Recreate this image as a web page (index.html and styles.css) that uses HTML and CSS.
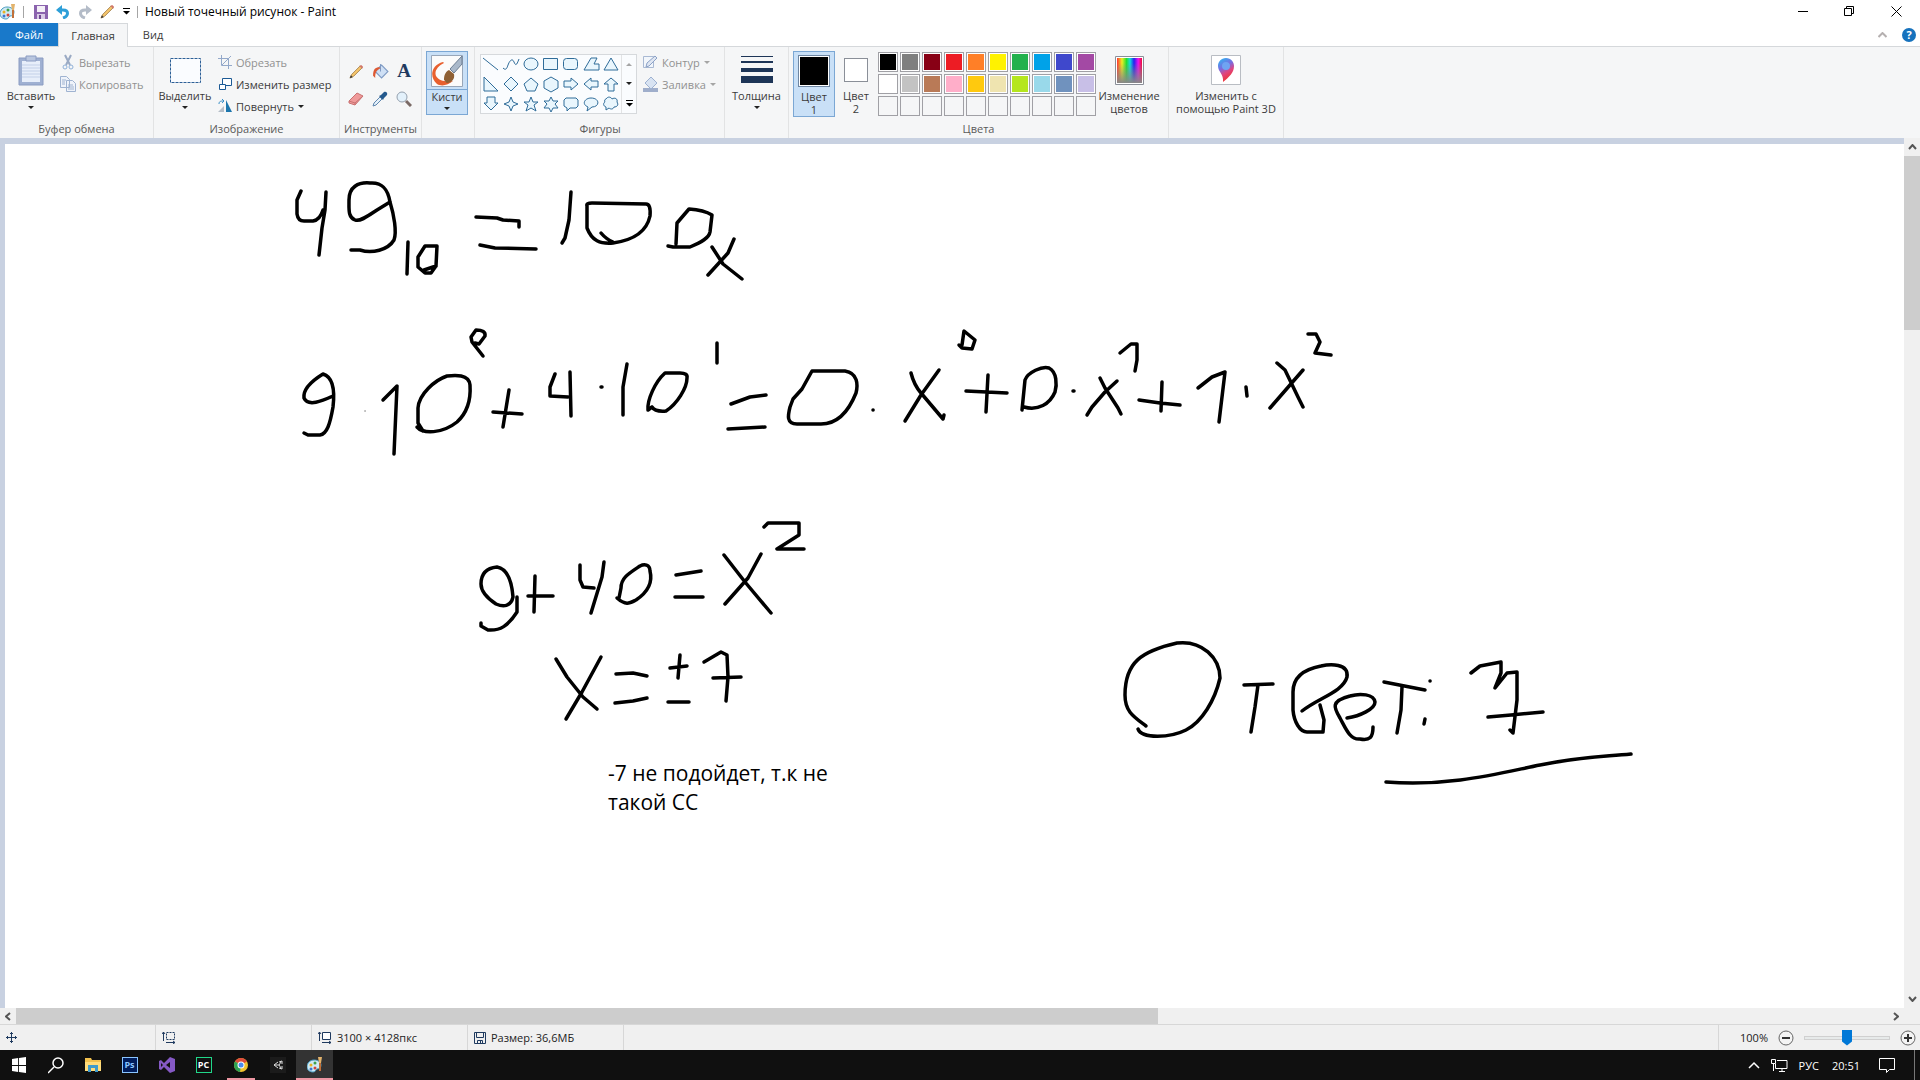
FILE: index.html
```html
<!DOCTYPE html>
<html lang="ru">
<head>
  <meta charset="UTF-8" />
  <meta name="viewport" content="width=device-width, initial-scale=1.0"/>
  <title>Новый точечный рисунок - Paint</title>

  <link rel="stylesheet" href="styles.css">
</head>

<body>
  <svg class="defs" width="0" height="0" aria-hidden="true">
    <defs>
      <linearGradient id="rainbow">
        <stop offset="0" stop-color="#f33"/><stop offset=".2" stop-color="#ee2"/>
        <stop offset=".38" stop-color="#2d3"/><stop offset=".52" stop-color="#1dd"/>
        <stop offset=".68" stop-color="#22e"/><stop offset=".85" stop-color="#e1e"/>
        <stop offset="1" stop-color="#e13"/>
      </linearGradient>
      <linearGradient id="fade" x2="0" y2="1">
        <stop offset=".2" stop-color="#888" stop-opacity="0"/><stop offset="1" stop-color="#888"/>
      </linearGradient>
      <linearGradient id="drop" x1="0" y1="0" x2=".4" y2="1">
        <stop offset="0" stop-color="#22c0f5"/><stop offset=".45" stop-color="#7b6be0"/>
        <stop offset=".7" stop-color="#e0457f"/><stop offset="1" stop-color="#e33"/>
      </linearGradient>
      <symbol id="palette" viewBox="0 0 16 16">
        <path d="M7 3C3 3 0 6 0 10c0 3 3 5 6 5 3 0 2-2 4-3 2 0 4-1 4-4 0-3-3-5-7-5z" fill="#cfeaf5" stroke="#4a9cc0"/>
        <circle cx="4" cy="8" r="1.5" fill="#e8b122"/><circle cx="8" cy="6" r="1.5" fill="#3f9f4a"/>
        <circle cx="4" cy="12" r="1.5" fill="#3c74d0"/><circle cx="8" cy="11" r="1.5" fill="#d0463c"/>
        <path d="M11 0h4l-1 6h-2z" fill="#e2b36c"/><path d="M13 6v8" stroke="#c0703a" stroke-width="2"/>
      </symbol>
      <symbol id="pencil" viewBox="0 0 16 16">
        <path d="M1 15l2-4 9-9 2 2-9 9z" fill="#f6c66b" stroke="#a5834f"/>
        <path d="M11 2l3 3 1-2-2-2z" fill="#d2776a"/><path d="M1 15l1-3 2 2z" fill="#333"/>
      </symbol>
      <symbol id="bucket" viewBox="0 0 16 16">
        <path d="M3 8l6-6 6 6-6 6z" fill="#cfe0f5" stroke="#7f9bc4"/><path d="M8 1v7" stroke="#7f9bc4" fill="none"/>
        <path d="M7 4C3 4 1 6 1 12l2 2c0-5 1-7 5-9z" fill="#dd5a35"/>
      </symbol>
    </defs>
  </svg>

  <header class="titlebar">
    <svg class="app-icon" width="16" height="16"><use href="#palette"/></svg>
    <span class="divider"></span>
    <button class="quick" aria-label="Сохранить">
      <svg width="14" height="14" viewBox="0 0 14 14"><path d="M0 0h14v14H0z" fill="#8b63ae"/><path d="M3 1h8v6H3z" fill="#f3eff7"/><path d="M3 9h8v5H3z" fill="#d9cbe6"/><path d="M5 10h2v4H5z" fill="#6d4892"/></svg>
    </button>
    <button class="quick" aria-label="Отменить">
      <svg width="14" height="14" viewBox="0 0 14 14"><path d="M2 5h5c6 0 6 6 0 8" fill="none" stroke="#2e9fd8" stroke-width="3"/><path d="M0 5l6-5v10z" fill="#2e9fd8"/></svg>
    </button>
    <button class="quick" aria-label="Повторить">
      <svg width="14" height="14" viewBox="0 0 14 14"><path d="M12 5H7c-6 0-6 6 0 8" fill="none" stroke="#b4bcc8" stroke-width="3"/><path d="M14 5L8 0v10z" fill="#b4bcc8"/></svg>
    </button>
    <button class="quick" aria-label="Карандаш"><svg width="15" height="15"><use href="#pencil"/></svg></button>
    <button class="quick more" aria-label="Настройка панели">
      <svg width="7" height="7" viewBox="0 0 7 7"><path d="M0 0h7v1H0zM0 3h7L3.500 6.500z"/></svg>
    </button>
    <span class="divider"></span>
    <h1>Новый точечный рисунок - Paint</h1>
    <div class="window-buttons">
      <button aria-label="Свернуть"><svg width="11" height="11"><path d="M0 5.500h10" stroke="#000"/></svg></button>
      <button aria-label="Восстановить"><svg width="11" height="11"><path d="M.5 2.500h7v7h-7zM2.500 2.500v-2h7v7h-2" fill="none" stroke="#000"/></svg></button>
      <button aria-label="Закрыть"><svg width="11" height="11"><path d="M.5 .5l10 10M10.500 .5l-10 10" stroke="#000"/></svg></button>
    </div>
  </header>

  <nav class="tabs">
    <a class="tab file" href="#file">Файл</a>
    <a class="tab active" href="#home">Главная</a>
    <a class="tab" href="#view">Вид</a>
    <div class="tabs-right">
      <button aria-label="Свернуть ленту"><svg width="9" height="6"><path d="M.5 5l4-4 4 4" fill="none" stroke="#b5b0b0" stroke-width="2"/></svg></button>
      <button class="help" aria-label="Справка">?</button>
    </div>
  </nav>

  <section class="ribbon">
    <div class="group clipboard">
      <div class="tools">
        <button class="big">
          <span class="pic"><svg width="26" height="31" viewBox="0 0 26 31"><path d="M1 3h24v27H1z" fill="#9fb0d2" stroke="#8b9cc2"/><path d="M4 6h18v21H4z" fill="#e7eefa"/><path d="M4 10h18M4 13h18M4 16h18M4 19h18M4 22h18" stroke="#c3d0e8"/><path d="M8 1h10v5H8z" fill="#b9c6df" stroke="#8b9cc2"/></svg></span>
          <span>Вставить</span><i class="arrow"></i>
        </button>
        <div class="list">
          <button class="small off"><svg width="16" height="16" viewBox="0 0 16 16"><path d="M5 1l5 10M11 1L6 11" stroke="#9aaac4" stroke-width="2"/><circle cx="5" cy="13" r="2" fill="none" stroke="#8fb0d8"/><circle cx="11" cy="13" r="2" fill="none" stroke="#8fb0d8"/></svg>Вырезать</button>
          <button class="small off"><svg width="16" height="16" viewBox="0 0 16 16"><path d="M.5 .5h6l3 3v8h-9zM6.500 4.500h6l3 3v8h-9z" fill="#eff3fa" stroke="#9fb3d1"/><path d="M2 4h4M2 6h3M2 8h3M8 9h5M8 11h6M8 13h6" stroke="#9fb3d1"/></svg>Копировать</button>
        </div>
      </div>
      <div class="name">Буфер обмена</div>
    </div>

    <div class="group image">
      <div class="tools">
        <button class="big">
          <span class="pic"><svg width="31" height="25"><path d="M.5 .5h30v24H.5z" fill="#fafcff" stroke="#2c5f96" stroke-dasharray="3 1"/></svg></span>
          <span>Выделить</span><i class="arrow"></i>
        </button>
        <div class="list">
          <button class="small off"><svg width="14" height="14" viewBox="0 0 14 14"><path d="M3.500 0v10.500H14M0 3.500h10.500V14M13 1L4 10" fill="none" stroke="#94a9ca"/></svg>Обрезать</button>
          <button class="small"><svg width="14" height="14" viewBox="0 0 14 14"><path d="M4.500 1.500h9v7h-9z" fill="#fff" stroke="#1c5a95"/><path d="M1.500 7.500h6v5h-6z" fill="#fff" stroke="#1c5a95"/></svg>Изменить размер</button>
          <button class="small"><svg width="14" height="14" viewBox="0 0 14 14"><path d="M8 1v12h6z" fill="#1c76ad"/><path d="M0 13l6-6v6z" fill="#b5bec8"/><path d="M1 5c0-3 2-3 5-3M4 0l2 2-2 2" fill="none" stroke="#3b90c8"/></svg>Повернуть<i class="arrow"></i></button>
        </div>
      </div>
      <div class="name">Изображение</div>
    </div>

    <div class="group instruments">
      <div class="tool-grid">
        <button aria-label="Карандаш"><svg width="15" height="15"><use href="#pencil"/></svg></button>
        <button aria-label="Заливка"><svg width="17" height="17"><use href="#bucket"/></svg></button>
        <button class="letter" aria-label="Текст">A</button>
        <button aria-label="Ластик"><svg width="16" height="14" viewBox="0 0 16 14"><path d="M1 9l8-8 6 3-8 9-6-2z" fill="#ef9a9a" stroke="#c97272"/><path d="M1 9l6 2 8-7M7 11v2" fill="none" stroke="#c97272"/></svg></button>
        <button aria-label="Палитра"><svg width="16" height="16" viewBox="0 0 16 16"><path d="M1 15l1-3 6-6 2 2-6 6z" fill="#e4f0fa" stroke="#5f86ae"/><path d="M7 5l4 4 1-2 3-3c1-2-1-4-3-3L9 4z" fill="#24598d"/></svg></button>
        <button aria-label="Масштаб"><svg width="16" height="16" viewBox="0 0 16 16"><circle cx="6" cy="6" r="5" fill="#e3f1fb" stroke="#94a0ae"/><path d="M10 10l5 5" stroke="#7a6a66" stroke-width="3"/></svg></button>
      </div>
      <div class="name">Инструменты</div>
    </div>

    <div class="group brushes">
      <button class="big selected">
        <span class="pic"><svg width="32" height="32" viewBox="0 0 32 32"><path d="M.5 .5h31v31H.5z" fill="#fbfbfb" stroke="#98a6b8"/><path d="M12 7C0 10-2 22 6 29c5 3 11 1 16-3-7 1-14 0-17-5-2-5 2-10 8-13z" fill="#e8602f"/><path d="M31 1v8l-8 9-4-4z" fill="#a9b8ca" stroke="#6d7f94"/><path d="M18 15l5 4c1 5-2 8-6 9-3 0-2-2-4-3 0-4 1-8 5-10z" fill="#8f6034"/></svg></span>
        <span>Кисти</span><i class="arrow"></i>
      </button>
    </div>

    <div class="group shapes">
      <div class="tools">
        <div class="gallery">
          <svg width="140" height="58" viewBox="0 0 140 58">
            <g fill="#e9f6fd" stroke="#2f6c99">
              <path d="M2 3l15 12" />
              <path d="M22 13c3 3 4 0 5-3s4-8 6-3 3 2 5-3" fill="none"/>
              <ellipse cx="50" cy="9" rx="7" ry="6"/>
              <path d="M62.500 3.500h14v11h-14z"/>
              <rect x="82.500" y="3.500" width="14" height="11" rx="3"/>
              <path d="M103 15l7-12h6l-3 6h5v6z"/>
              <path d="M130 3l7 12h-14z"/>
              <path d="M3 22v14h14z"/><path d="M30 22l7 7-7 7-7-7z"/>
              <path d="M50 23l7 6-3 7h-8l-3-7z"/><path d="M70 22l7 4v7l-7 4-7-4v-7z"/>
              <path d="M83 26h7v-3l7 6-7 6v-3h-7z"/><path d="M117 26h-7v-3l-7 6 7 6v-3h7z"/>
              <path d="M127 36v-7h-4l7-6 7 6h-4v7z"/>
              <path d="M6 42h8v6h3l-7 7-7-7h3z"/><path d="M30 42l2 5 5 2-5 2-2 5-2-5-5-2 5-2z"/>
              <path d="M50 42l2 5h5l-4 3 2 6-5-3-5 3 2-6-4-3h5z"/>
              <path d="M70 42l2 4h5l-3 3 3 4h-5l-2 4-2-4h-5l3-4-3-3h5z"/>
              <path d="M85 43h10l2 2v6l-2 2h-6l-3 3v-3l-3-2v-6z"/>
              <path d="M107 52c-7-3-3-9 3-9 9 0 9 9 1 9l-5 4z"/>
              <path d="M125 44c2-3 5-2 6 0 3-2 6 0 5 3 2 3 0 5-3 5-1 3-4 2-5 1l-3 2v-3c-3-1-3-4-1-5-1-1 0-3 1-3z"/>
            </g>
          </svg>
          <div class="gallery-nav">
            <button class="off" aria-label="Вверх"><i class="arrow up"></i></button>
            <button aria-label="Вниз"><i class="arrow"></i></button>
            <button aria-label="Все фигуры"><svg width="7" height="7" viewBox="0 0 7 7"><path d="M0 0h7v1H0zM0 3h7L3.500 6.500z"/></svg></button>
          </div>
        </div>
        <div class="list">
          <button class="small off"><svg width="15" height="14" viewBox="0 0 15 14"><path d="M.5 1.500h10v11H.5z" fill="#f2f6fb" stroke="#a9b9d3"/><path d="M3 12l1-4 8-7 2 2-8 8z" fill="#dfe6f2" stroke="#8ba1c6"/></svg>Контур<i class="arrow"></i></button>
          <button class="small off"><svg width="15" height="16" viewBox="0 0 15 16"><path d="M0 12h15v4H0z" fill="#9faecb"/><path d="M2 7l6-6 6 6-6 6z" fill="#d8e3f2" stroke="#9db1d1"/></svg>Заливка<i class="arrow"></i></button>
        </div>
      </div>
      <div class="name">Фигуры</div>
    </div>

    <div class="group width">
      <button class="big">
        <span class="pic"><svg width="32" height="28"><path d="M0 0h32v1H0zM0 5h32v2H0zM0 12h32v4H0zM0 20h32v7H0z" fill="#1d3557"/></svg></span>
        <span>Толщина</span><i class="arrow"></i>
      </button>
    </div>

    <div class="group colors">
      <div class="tools">
        <button class="big pick selected"><span class="pic"><i class="swatch large"></i></span><span>Цвет<br>1</span></button>
        <button class="big pick"><span class="pic"><i class="swatch"></i></span><span>Цвет<br>2</span></button>
        <div class="palette">
          <button style="--c:#000" aria-label="Черный"></button><button style="--c:#7f7f7f" aria-label="Серый"></button><button style="--c:#880015" aria-label="Темно-красный"></button><button style="--c:#ed1c24" aria-label="Красный"></button><button style="--c:#ff7f27" aria-label="Оранжевый"></button><button style="--c:#fff200" aria-label="Желтый"></button><button style="--c:#22b14c" aria-label="Зеленый"></button><button style="--c:#00a2e8" aria-label="Бирюзовый"></button><button style="--c:#3f48cc" aria-label="Индиго"></button><button style="--c:#a349a4" aria-label="Лиловый"></button>
          <button style="--c:#fff" aria-label="Белый"></button><button style="--c:#c3c3c3" aria-label="Светло-серый"></button><button style="--c:#b97a57" aria-label="Коричневый"></button><button style="--c:#ffaec9" aria-label="Розовый"></button><button style="--c:#ffc90e" aria-label="Золотой"></button><button style="--c:#efe4b0" aria-label="Светло-желтый"></button><button style="--c:#b5e61d" aria-label="Травяной"></button><button style="--c:#99d9ea" aria-label="Светло-бирюзовый"></button><button style="--c:#7092be" aria-label="Сизый"></button><button style="--c:#c8bfe7" aria-label="Светло-лиловый"></button>
          <button class="empty"></button><button class="empty"></button><button class="empty"></button><button class="empty"></button><button class="empty"></button><button class="empty"></button><button class="empty"></button><button class="empty"></button><button class="empty"></button><button class="empty"></button>
        </div>
        <button class="big edit">
          <span class="pic"><svg width="29" height="29"><path d="M.5 .5h28v28H.5z" fill="#fff" stroke="#8a8f98"/><path d="M2 2h25v25H2z" fill="url(#rainbow)"/><path d="M2 2h25v25H2z" fill="url(#fade)"/></svg></span>
          <span>Изменение<br>цветов</span>
        </button>
      </div>
      <div class="name">Цвета</div>
    </div>

    <div class="group paint3d">
      <button class="big">
        <span class="pic"><svg width="30" height="30"><path d="M.5 .5h29v29H.5z" fill="#fff" stroke="#b9bdc3"/><path d="M15 3c-5 0-8 4-8 8 0 6 6 8 5 16 6-5 11-9 11-16 0-4-3-8-8-8z" fill="url(#drop)"/><circle cx="15" cy="11" r="4" fill="#6fa4f2"/></svg></span>
        <span>Изменить с<br>помощью Paint 3D</span>
      </button>
    </div>
  </section>

  <main class="workspace">
    <div class="sheet">
      <!-- pen strokes, window coordinates -->
      <svg class="ink" width="3100" height="4128" viewBox="5 144 3100 4128" stroke-width="3.500">
        <path d="M301 191L297 200V214Q298 221 304 221H313Q320 220 323 210M326 192L325 210 322 228 319 255"/>
        <path d="M390 202L377 210C368 216 360 222 355 220C348 217 349 210 349 200C349 187 358 182 370 183C383 182 388 190 390 202C394 215 397 232 394 240C388 250 372 254 360 250H351"/>
        <path d="M408 242L407 274M437 246H425L418 257V267L425 273H431L436 266ZM424 270L436 266"/>
        <path d="M476 217L497 218 503 220 519 221V227M480 245L495 248 536 249"/>
        <path d="M571 192L569 220 565 238 562 243M587 228V206Q586 203 592 203L646 204Q651 204 650 216C647 230 635 240 613 243C600 244 592 241 587 228M601 233Q606 239 613 242"/>
        <path d="M668 246L673 247H690C702 242 709 238 710 232L712 215Q704 210 689 209L677 223 676 244"/>
        <path d="M734 239L728 253 708 275M712 247L723 264 742 279"/>

        <path d="M333 396C322 401 308 407 304 398C303 390 310 382 323 374C333 377 335 390 333 407C330 424 327 434 320 435H308L304 433"/>
        <path d="M383 400L397 386 394 454M417 427C423 434 442 434 457 422C468 412 471 400 470 385C469 374 455 375 447 376C435 380 419 394 418 408V423L423 431"/>
        <path d="M483 356L472 342 471 337 476 330Q486 330 485 336L479 344 475 343"/>
        <path d="M493 412L522 414M509 390L503 427M555 374L550 387V396L568 397M570 372L571 416"/>
        <path d="M627 364L623 387V415M652 407Q655 412 666 411C677 404 687 388 687 378Q688 373 680 373H665C655 382 647 400 648 410L652 407"/>
        <path d="M717 343V363M731 404L750 397 766 395M728 429L765 427"/>
        <path d="M812 371H845C858 373 858 385 856 393C850 408 840 424 821 424H797C786 424 788 415 790 407L793 399 802 389Z"/>
        <path d="M911 373Q914 385 921 393L943 419 944 415M939 370L921 395 905 421"/>
        <path d="M959 345L962 348 972 349 975 340 964 331 962 345M966 391L1007 393M988 375L986 412"/>
        <path d="M1022 410L1025 380C1028 372 1042 366 1049 368C1057 372 1057 385 1055 392C1050 404 1038 411 1024 407"/>
        <path d="M1100 378L1105 388 1118 408 1121 414M1117 381L1105 392 1092 407 1087 415M1120 353L1131 344H1137V360L1135 371"/>
        <path d="M1139 400L1160 403 1180 405M1162 382L1161 411M1198 388L1212 377 1225 372 1219 422"/>
        <path d="M1246 387L1247 396M1277 363L1285 370 1298 397 1303 407M1303 370L1270 408M1308 334H1316L1320 342 1315 353 1331 355"/>
        <path d="M601 387h1M873 410h.1M1073 391h1"/>
        <path class="thin" d="M365 411h.1"/>

        <path d="M513 597C511 607 503 607 496 604C487 598 481 592 481 584C481 573 487 568 497 567C508 569 512 584 513 597M517 597V612C508 626 500 631 488 630L481 626V623"/>
        <path d="M528 596H553M535 576L534 612M580 565V580L583 587 594 588M604 562L602 577 591 613"/>
        <path d="M617 598C626 606 630 603 636 600C648 592 653 583 650 571C650 564 644 564 640 566C628 574 621 578 621 588L619 598"/>
        <path d="M676 575L701 571M675 597H703M724 555L745 582 771 613M761 554L748 578 725 604M764 527L768 523H799V535L777 549H804"/>

        <path d="M556 659L567 677 583 697 597 709M601 657L582 692 566 719M616 674L633 673 647 676M615 703L633 701 647 698"/>
        <path d="M670 668L687 666M680 655L678 678M668 702H689M704 662L721 652 727 655 728 677 726 701M713 678L741 677"/>

        <path d="M1146 726C1134 717 1125 712 1125 695C1125 662 1142 651 1177 643C1202 640 1220 658 1220 678C1215 700 1202 722 1186 730C1170 738 1142 739 1138 729"/>
        <path d="M1244 685L1273 684M1258 685L1255 707 1251 732"/>
        <path d="M1302 711C1318 698 1343 692 1347 677C1349 663 1330 664 1321 666C1300 670 1293 680 1293 692V710C1294 722 1300 732 1307 732H1323L1324 720 1320 705"/>
        <path d="M1347 718C1360 716 1375 709 1375 702C1374 694 1360 693 1350 696C1330 701 1334 708 1340 718C1346 729 1350 740 1360 739C1370 741 1373 737 1373 727"/>
        <path d="M1384 682L1425 690M1402 687L1401 710 1397 733M1430 681h.1M1425 719L1424 724"/>
        <path d="M1471 673L1480 666 1501 662V673L1495 688 1507 673 1517 672V700L1513 733 1510 730M1488 717L1511 715 1543 712"/>
        <path d="M1386 782C1450 787 1500 773 1540 765S1600 757 1631 754"/>
      </svg>
      <p class="note">-7 не подойдет, т.к не<br>такой СС</p>
    </div>
    <div class="scroll-v">
      <button aria-label="Вверх"><svg width="9" height="6"><path d="M1 5l3.500-4L8 5" fill="none" stroke="#555" stroke-width="2"/></svg></button>
      <div class="thumb"></div>
      <button aria-label="Вниз"><svg width="9" height="6"><path d="M1 1l3.500 4L8 1" fill="none" stroke="#555" stroke-width="2"/></svg></button>
    </div>
    <div class="scroll-h">
      <button aria-label="Влево"><svg width="6" height="9"><path d="M5 1L1 4.500 5 8" fill="none" stroke="#555" stroke-width="2"/></svg></button>
      <div class="thumb"></div>
      <button aria-label="Вправо"><svg width="6" height="9"><path d="M1 1l4 3.500L1 8" fill="none" stroke="#555" stroke-width="2"/></svg></button>
    </div>
  </main>

  <footer class="statusbar">
    <div class="cell"><svg width="11" height="11"><path d="M5.500 0v11M0 5.500h11M4 2l1.500-1.500L7 2M4 9l1.500 1.500L7 9M2 4L.5 5.500 2 7M9 4l1.500 1.500L9 7" fill="none" stroke="#1f3a5f"/></svg></div>
    <div class="cell"><svg width="14" height="13"><path d="M4.500 1.500h8v7h-8z" fill="none" stroke="#1f3a5f" stroke-dasharray="2 1"/><path d="M1.500 10V1M0 3l1.500-2L3 3M4 11.500h9M11 10l2 1.500-2 1.500" fill="none" stroke="#1f3a5f"/></svg></div>
    <div class="cell"><svg width="14" height="13"><path d="M4.500 1.500h8v7h-8z" fill="#fff" stroke="#1f3a5f"/><path d="M1.500 10V1M0 3l1.500-2L3 3M4 11.500h9M11 10l2 1.500-2 1.500" fill="none" stroke="#1f3a5f"/></svg>3100 × 4128пкс</div>
    <div class="cell"><svg width="12" height="12"><path d="M.5 .5h11v11H.5zM2.500 .5v5h7v-5M3.500 11.500v-3h5v3M6.500 9v2" fill="none" stroke="#1f3a5f"/></svg>Размер: 36,6МБ</div>
    <div class="zoom">
      <label for="zoom">100%</label>
      <button aria-label="Уменьшить"><svg width="16" height="16"><circle cx="8" cy="8" r="7" fill="#f4f4f4" stroke="#666"/><path d="M4 8h8" stroke="#333" stroke-width="2"/></svg></button>
      <input id="zoom" type="range" min="0" max="100" value="50">
      <button aria-label="Увеличить"><svg width="16" height="16"><circle cx="8" cy="8" r="7" fill="#f4f4f4" stroke="#666"/><path d="M4 8h8M8 4v8" stroke="#333" stroke-width="2"/></svg></button>
    </div>
  </footer>

  <nav class="taskbar">
    <button aria-label="Пуск"><svg width="14" height="16" viewBox="0 0 16 16" preserveAspectRatio="none"><path d="M0 2l7-1v7H0zM8 1l8-1v8H8zM0 9h7v6l-7-1zM8 9h8v7l-8-1z" fill="#fff"/></svg></button>
    <button aria-label="Поиск"><svg width="16" height="17"><circle cx="10" cy="6" r="5" fill="none" stroke="#fff" stroke-width="1.500"/><path d="M6 10l-6 6" stroke="#fff" stroke-width="1.500"/></svg></button>
    <button aria-label="Проводник"><svg width="16" height="14"><path d="M0 0h6l1 2h9v11H0z" fill="#f2c14e"/><path d="M0 4h16v9H0z" fill="#ffdc7b"/><path d="M3 14V7h10v7h-3v-4H6v4z" fill="#3f9bcb"/></svg></button>
    <button aria-label="Photoshop"><span class="badge ps">Ps</span></button>
    <button aria-label="Visual Studio"><svg width="16" height="16"><path d="M11 0l5 2v12l-5 2-6-6-3 3-2-1V4l2-1 3 3zM11 5L7 8l4 3zM2 6v4l2-2z" fill="#8559c5" fill-rule="evenodd"/></svg></button>
    <button aria-label="PyCharm"><span class="badge pc">PC</span></button>
    <button class="running" aria-label="Chrome"><svg width="14" height="14" viewBox="0 0 14 14"><circle cx="7" cy="7" r="7" fill="#f2c230"/><path d="M7 7L1 3.500A7 7 0 0 1 13 3.500z" fill="#df4b3c"/><path d="M7 7L1 3.500A7 7 0 0 0 6 14z" fill="#2da152"/><circle cx="7" cy="7" r="3.500" fill="#fff"/><circle cx="7" cy="7" r="2.500" fill="#4c8bf0"/></svg></button>
    <button aria-label="Unity"><svg width="16" height="16"><path d="M0 0h16v16H0z" fill="#1b1b1b"/><path d="M4 8l4-3M4 8l4 3M4 8h5l2-3M9 8l2 3M9 5l3-1v3M9 11l3 1V9" fill="none" stroke="#ddd"/></svg></button>
    <button class="running current" aria-label="Paint"><svg width="16" height="16"><use href="#palette"/></svg></button>
    <div class="tray">
      <button aria-label="Скрытые значки"><svg width="12" height="8"><path d="M1 7l5-5 5 5" fill="none" stroke="#fff" stroke-width="1.500"/></svg></button>
      <button aria-label="Сеть"><svg width="17" height="15"><path d="M6 2.500h10v8H4.500V6M.5 1.500h4v4h-4zM2.500 6v7M8 13.500h6M11 11v2" fill="none" stroke="#fff"/></svg></button>
      <span>РУС</span>
      <time>20:51</time>
      <button aria-label="Уведомления"><svg width="16" height="16"><path d="M.5 1.500h15v11h-5l-3 3v-3h-7z" fill="none" stroke="#fff"/></svg></button>
    </div>
  </nav>
</body>
</html>
```

FILE: styles.css
```css
* {
  box-sizing: border-box;
}

body {
  margin: 0;
  height: 100vh;
  display: flex;
  flex-direction: column;
  overflow: hidden;
  font: 11px/13px "Open Sans", "Noto Sans", sans-serif;
  color: #3b3b3b;
  background: #fff;
}

button {
  font: inherit;
  color: inherit;
  border: none;
  background: none;
  padding: 0;
}

svg {
  display: block;
  flex: none;
}

.defs {
  position: absolute;
}

/* title bar */
.titlebar {
  flex: none;
  height: 23px;
  display: flex;
  align-items: center;
}

.titlebar h1 {
  margin: 0 0 0 7px;
  font-size: 12px;
  font-weight: normal;
  color: #000;
}

.divider {
  width: 1px;
  height: 12px;
  background: #a5a5a5;
}

.app-icon {
  margin-right: 7px;
}

.quick {
  width: 22px;
  height: 22px;
  display: grid;
  place-items: center;
}

.divider + .quick {
  margin-left: 6px;
}

.quick.more {
  width: 16px;
  margin-right: 3px;
}

.window-buttons {
  margin-left: auto;
  display: flex;
}

.window-buttons button {
  width: 46px;
  height: 20px;
  display: grid;
  place-items: center;
}

.window-buttons button:last-child {
  width: 48px;
}

/* tabs */
.tabs {
  flex: none;
  height: 24px;
  display: flex;
  border-bottom: 1px solid #d5d8db;
}

.tab {
  height: 23px;
  padding: 0 15px;
  line-height: 23px;
  color: #3b3b3b;
  text-decoration: none;
}

.tab.file {
  background: #1979ca;
  color: #fff;
}

.tab.active {
  height: 24px;
  padding: 0 12px;
  background: #f5f6f7;
  border: 1px solid #d5d8db;
  border-bottom: none;
}

.tabs-right {
  margin-left: auto;
  display: flex;
  align-items: center;
  gap: 15px;
  padding-right: 4px;
}

.help {
  width: 14px;
  height: 14px;
  border-radius: 50%;
  background: #1672bd;
  color: #fff;
  font-weight: bold;
  line-height: 14px;
}

/* ribbon */
.ribbon {
  flex: none;
  height: 91px;
  display: flex;
  background: #f5f6f7;
}

.group {
  display: flex;
  flex-direction: column;
  padding: 4px 4px 0;
  border-right: 1px solid #e2e3e4;
}

.tools {
  display: flex;
}

.name {
  margin-top: auto;
  line-height: 18px;
  text-align: center;
  color: #5a5a5a;
}

.big {
  display: flex;
  flex-direction: column;
  align-items: center;
  height: 66px;
  text-align: center;
  white-space: nowrap;
}

.pic {
  height: 38px;
  display: grid;
  place-items: center;
}

.selected {
  background: #c9e0f7;
  border: 1px solid #7ba7d4;
}

.arrow {
  display: inline-block;
  margin-top: 4px;
  border: 3px solid transparent;
  border-top-color: #222;
  border-bottom: none;
}

.arrow.up {
  transform: rotate(180deg);
}

.small .arrow {
  margin: 0;
}

.list {
  display: flex;
  flex-direction: column;
}

.small {
  height: 22px;
  display: flex;
  align-items: center;
  gap: 4px;
  white-space: nowrap;
}

.off {
  color: #919191;
}

.off .arrow {
  border-top-color: #a5a5a5;
}

.clipboard {
  width: 154px;
}

.clipboard .big {
  width: 54px;
}

.clipboard .small {
  gap: 3px;
  padding-left: 2px;
}

.image {
  width: 186px;
}

.image .big {
  width: 54px;
  margin-right: 6px;
}

.instruments {
  width: 82px;
}

.tool-grid {
  display: grid;
  grid-template-columns: repeat(3, 24px);
  grid-auto-rows: 28px;
  padding-top: 6px;
}

.tool-grid button {
  display: grid;
  place-items: center;
}

.tool-grid .letter {
  font: bold 19px "Liberation Serif", serif;
  color: #1f3a5f;
}

.brushes {
  width: 53px;
}

.brushes .big {
  height: 64px;
  width: 42px;
}

.brushes .pic {
  width: 40px;
  height: 38px;
  border-bottom: 1px solid #7ba7d4;
}

.shapes {
  width: 250px;
  padding-left: 5px;
}

.gallery {
  display: flex;
  height: 60px;
  margin: 3px 6px 0 0;
  background: #fafcfe;
  border: 1px solid #d6d9dc;
}

.gallery-nav {
  width: 15px;
  display: grid;
  grid-template-rows: repeat(3, 1fr);
  border-left: 1px solid #e2e3e4;
}

.gallery-nav button {
  display: grid;
  place-items: center;
}

.gallery-nav .arrow {
  margin: 0;
}

.width {
  width: 64px;
}

.colors {
  width: 380px;
}

.pick {
  width: 42px;
}

.swatch {
  width: 24px;
  height: 24px;
  background: #fff;
  border: 1px solid #8a8f98;
}

.swatch.large {
  width: 32px;
  height: 32px;
  background: #000;
  border-color: #6f87a3;
  box-shadow: inset 0 0 0 1px #fff;
}

.palette {
  display: grid;
  grid-template-columns: repeat(10, 20px);
  grid-auto-rows: 20px;
  gap: 2px;
  margin: 1px 2px 0 1px;
}

.palette button {
  background: var(--c);
  border: 1px solid #a0a0a5;
  box-shadow: inset 0 0 0 1px #fff;
}

.palette .empty {
  box-shadow: none;
}

.edit {
  width: 62px;
}

.paint3d {
  width: 115px;
}

/* canvas */
.workspace {
  flex: 1;
  min-height: 0;
  display: grid;
  grid-template: 1fr 16px / 1fr 16px;
  background: #f0f0f0;
}

.sheet {
  position: relative;
  overflow: hidden;
  border: solid #c8d1e1;
  border-width: 6px 0 0 5px;
  background: #fff;
}

.ink {
  fill: none;
  stroke: #000;
  stroke-linecap: round;
  stroke-linejoin: round;
}

.thin {
  stroke-width: 1px;
}

.note {
  position: absolute;
  left: 603px;
  top: 615px;
  margin: 0;
  font-size: 21px;
  line-height: 29px;
  color: #000;
  white-space: nowrap;
}

.scroll-v,
.scroll-h {
  display: flex;
}

.scroll-v {
  flex-direction: column;
}

.scroll-v button,
.scroll-h button {
  width: 16px;
  height: 16px;
  display: grid;
  place-items: center;
}

.scroll-v button {
  height: 18px;
}

.scroll-v button:last-child,
.scroll-h button:last-child {
  margin-top: auto;
  margin-left: auto;
}

.scroll-v .thumb {
  height: 20%;
  background: #cdcdcd;
}

.scroll-h .thumb {
  width: 60%;
  background: #cdcdcd;
}

/* status bar */
.statusbar {
  flex: none;
  height: 26px;
  display: flex;
  background: #f0f0f0;
  border-top: 1px solid #d7d7d7;
  color: #222;
}

.cell {
  width: 156px;
  display: flex;
  align-items: center;
  gap: 5px;
  padding-left: 6px;
  border-right: 1px solid #d7d7d7;
  white-space: nowrap;
}

.zoom {
  margin-left: auto;
  display: flex;
  align-items: center;
  gap: 10px;
  padding: 0 4px 0 21px;
  border-left: 1px solid #d7d7d7;
}

.zoom input {
  appearance: none;
  width: 86px;
  height: 18px;
  margin: 0;
  background: none;
}

.zoom input::-webkit-slider-runnable-track {
  height: 4px;
  background: #e7eaea;
  border: 1px solid #d0d0d0;
}

.zoom input::-webkit-slider-thumb {
  appearance: none;
  width: 10px;
  height: 16px;
  margin-top: -7px;
  background: #0078d7;
  clip-path: polygon(0 0, 100% 0, 100% 75%, 50% 100%, 0 75%);
}

/* taskbar */
.taskbar {
  flex: none;
  height: 30px;
  display: flex;
  background: #101010;
  color: #fff;
}

.taskbar > button {
  width: 37px;
  display: grid;
  place-items: center;
}

.running {
  background: linear-gradient(#ee97a3, #ee97a3) center bottom / 28px 2px no-repeat;
}

.current {
  background-color: #333;
  background-size: 100% 2px;
}

.badge {
  width: 16px;
  height: 16px;
  font: bold 9px/14px "Open Sans", sans-serif;
  border: 1px solid #8ac5ff;
}

.ps {
  background: #001d5c;
  color: #8ac5ff;
}

.pc {
  background: #111;
  border-color: #21d789;
}

.tray {
  margin-left: auto;
  display: flex;
  align-items: center;
  gap: 11px;
  padding-right: 19px;
  margin-right: 5px;
  border-right: 1px solid #777;
}

.tray time {
  margin: 0 8px 0 2px;
}
```
